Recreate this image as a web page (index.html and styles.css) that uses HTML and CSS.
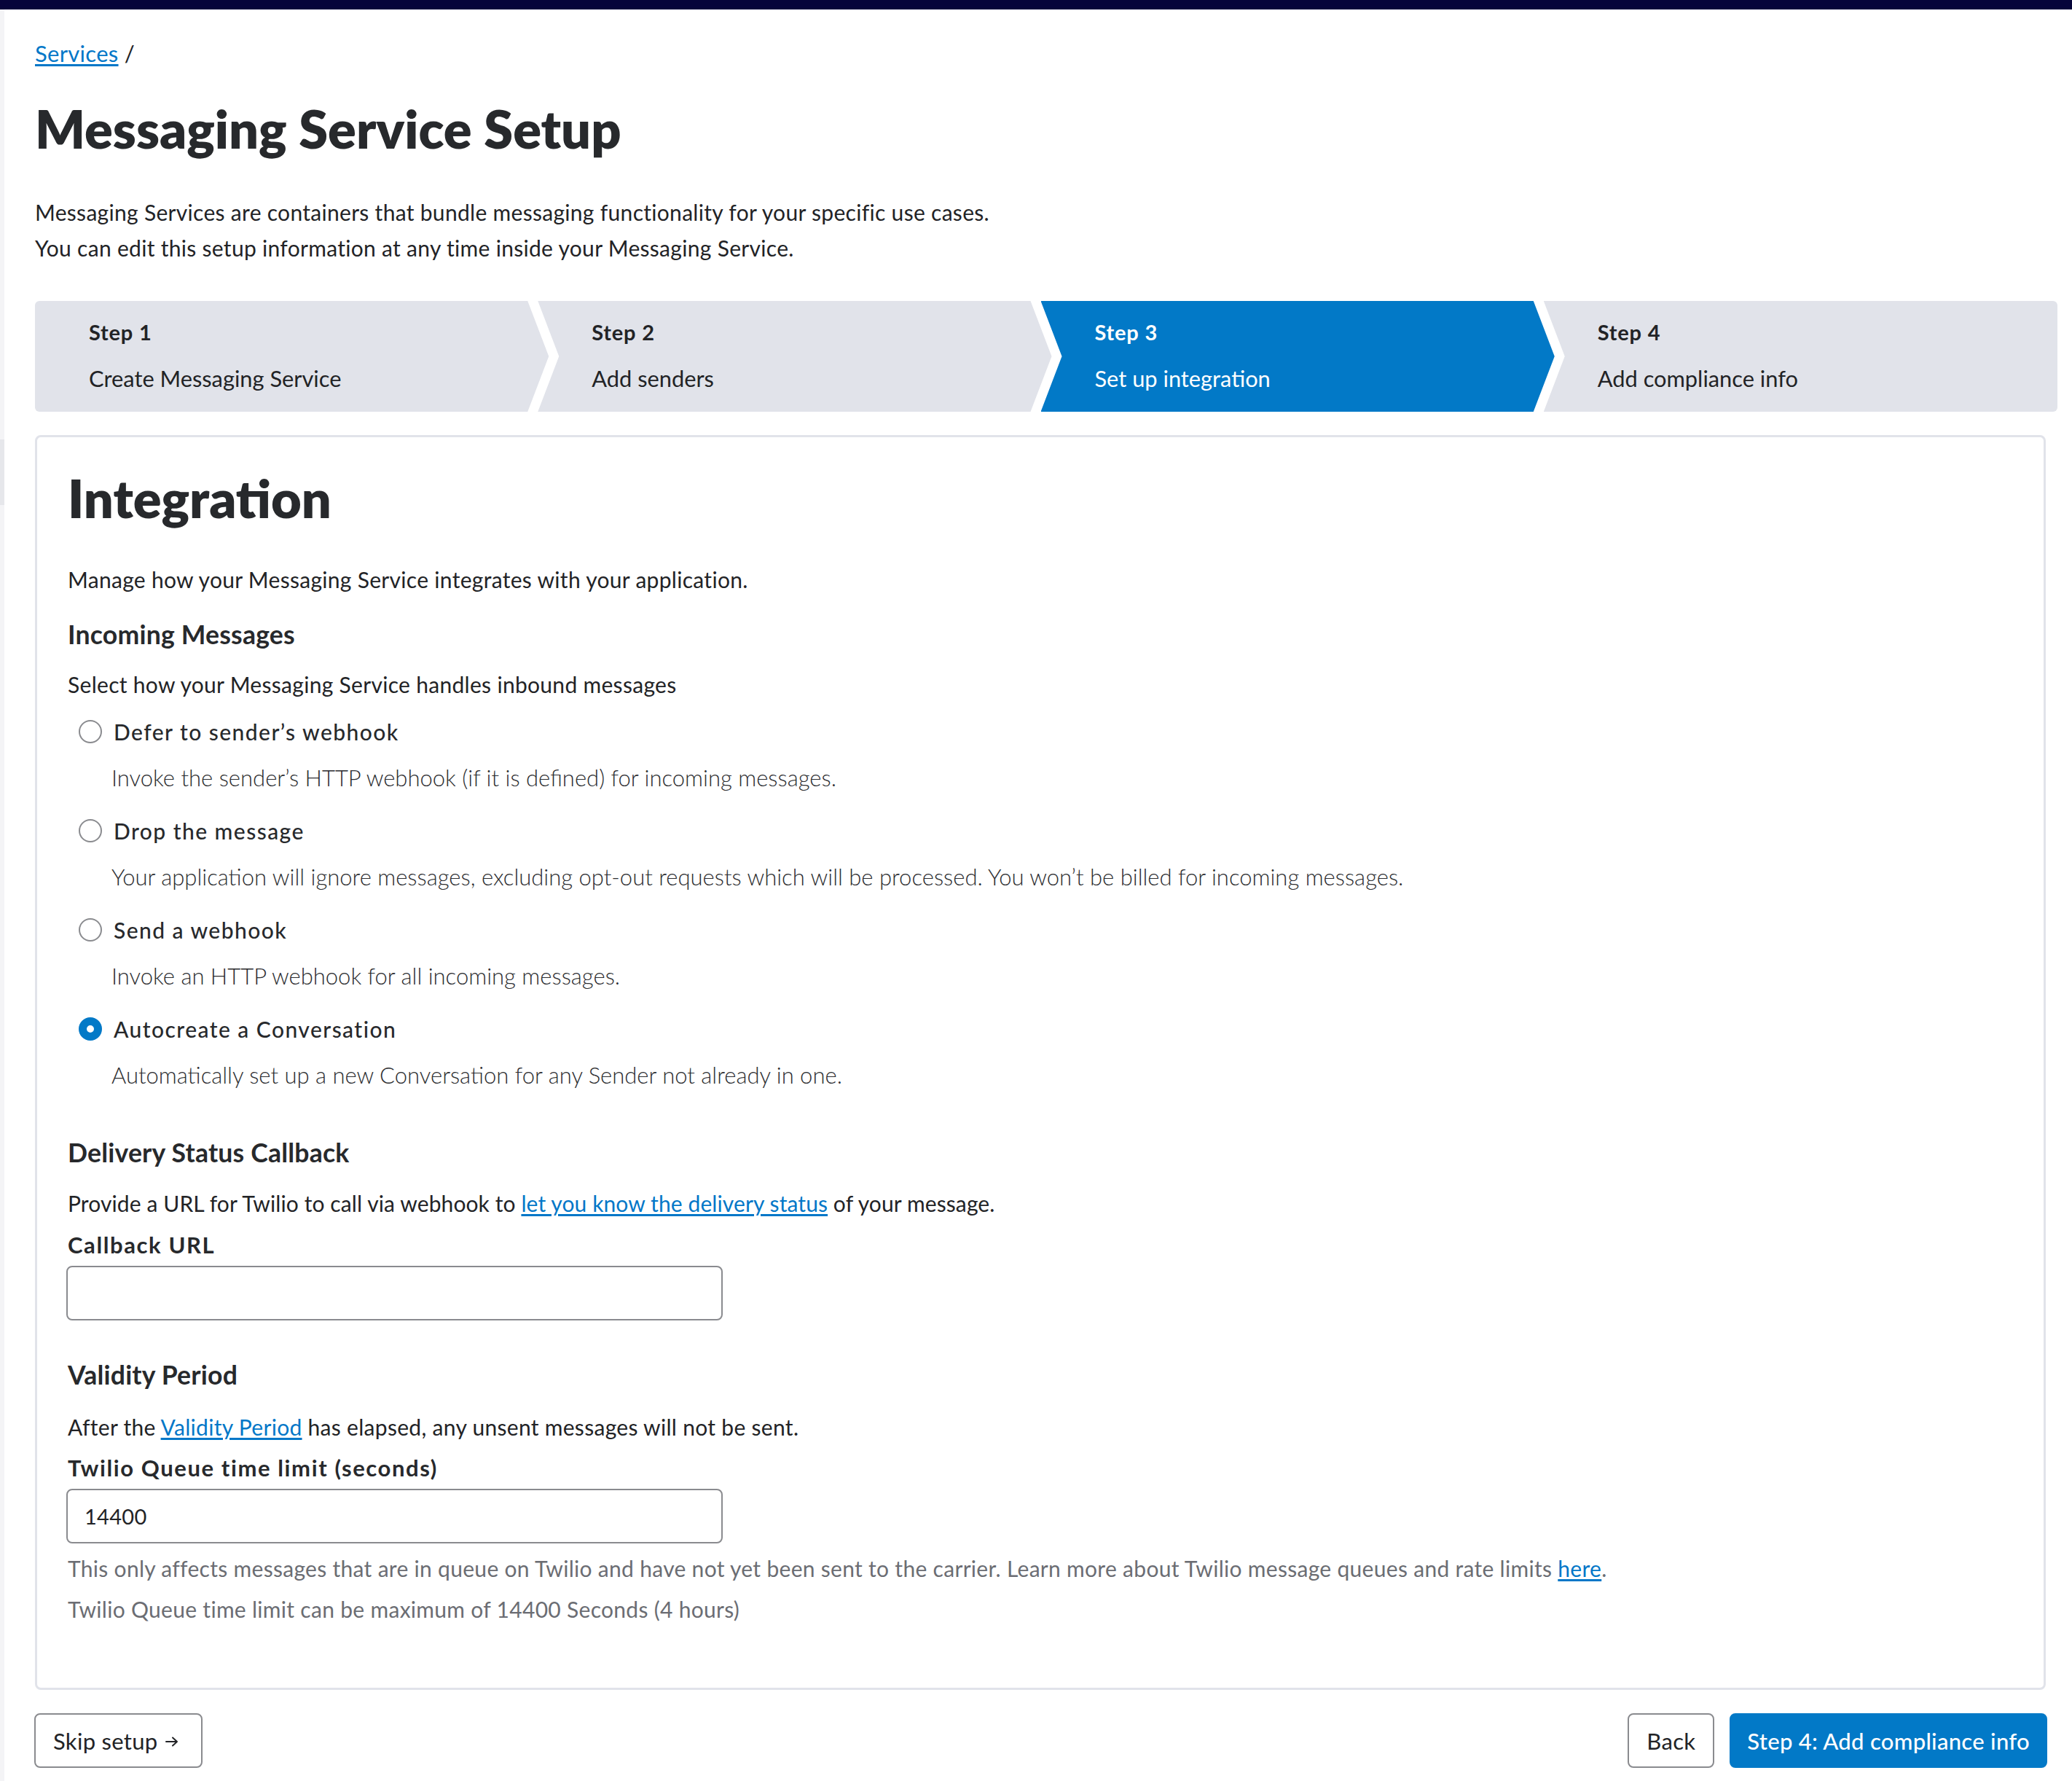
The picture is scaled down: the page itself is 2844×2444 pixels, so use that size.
FILE: index.html
```html
<!DOCTYPE html>
<html lang="en">
<head>
<meta charset="utf-8">
<title>Messaging Service Setup</title>
<link rel="stylesheet" href="styles.css">
</head>
<body>
<div class="topbar"></div>
<div class="shell">
  <aside class="rail"><div class="rail-mark"></div></aside>
  <main class="main">
    <nav class="crumbs"><a href="#" class="link">Services</a> /</nav>
    <h1 class="page-title">Messaging Service Setup</h1>
    <p class="intro">Messaging Services are containers that bundle messaging functionality for your specific use cases.<br>You can edit this setup information at any time inside your Messaging Service.</p>

    <ol class="steps">
      <li class="step step-first"><span class="step-num">Step 1</span><span class="step-name">Create Messaging Service</span></li>
      <li class="step step-mid"><span class="step-num">Step 2</span><span class="step-name">Add senders</span></li>
      <li class="step step-mid step-active"><span class="step-num">Step 3</span><span class="step-name">Set up integration</span></li>
      <li class="step step-last"><span class="step-num">Step 4</span><span class="step-name">Add compliance info</span></li>
    </ol>

    <section class="card">
      <h2 class="card-title">Integration</h2>
      <p class="text lead">Manage how your Messaging Service integrates with your application.</p>

      <h3 class="section-title first">Incoming Messages</h3>
      <p class="text sub">Select how your Messaging Service handles inbound messages</p>

      <div class="options">
        <div class="option">
          <div class="option-row"><span class="radio"></span><span class="option-label">Defer to sender’s webhook</span></div>
          <p class="option-desc">Invoke the sender’s HTTP webhook (if it is defined) for incoming messages.</p>
        </div>
        <div class="option">
          <div class="option-row"><span class="radio"></span><span class="option-label">Drop the message</span></div>
          <p class="option-desc">Your application will ignore messages, excluding opt-out requests which will be processed. You won’t be billed for incoming messages.</p>
        </div>
        <div class="option">
          <div class="option-row"><span class="radio"></span><span class="option-label">Send a webhook</span></div>
          <p class="option-desc">Invoke an HTTP webhook for all incoming messages.</p>
        </div>
        <div class="option">
          <div class="option-row"><span class="radio checked"></span><span class="option-label">Autocreate a Conversation</span></div>
          <p class="option-desc">Automatically set up a new Conversation for any Sender not already in one.</p>
        </div>
      </div>

      <h3 class="section-title delivery">Delivery Status Callback</h3>
      <p class="text sub tight">Provide a URL for Twilio to call via webhook to <a href="#" class="link">let you know the delivery status</a> of your message.</p>
      <label class="field-label">Callback URL</label>
      <div class="input"></div>

      <h3 class="section-title validity">Validity Period</h3>
      <p class="text sub">After the <a href="#" class="link">Validity Period</a> has elapsed, any unsent messages will not be sent.</p>
      <label class="field-label">Twilio Queue time limit (seconds)</label>
      <div class="input"><span class="input-value">14400</span></div>
      <p class="help first-help">This only affects messages that are in queue on Twilio and have not yet been sent to the carrier. Learn more about Twilio message queues and rate limits <a href="#" class="link">here</a>.</p>
      <p class="help">Twilio Queue time limit can be maximum of 14400 Seconds (4 hours)</p>
    </section>

    <div class="actions">
      <button class="btn btn-secondary btn-skip">Skip setup <svg class="arrow" viewBox="0 0 20 16" width="20" height="16" aria-hidden="true"><path d="M2 8h15M11 2.5 17 8l-6 5.5" fill="none" stroke="currentColor" stroke-width="2" stroke-linecap="round" stroke-linejoin="round"/></svg></button>
      <div class="actions-right">
        <button class="btn btn-secondary">Back</button>
        <button class="btn btn-primary">Step 4: Add compliance info</button>
      </div>
    </div>
  </main>
</div>
</body>
</html>
```

FILE: styles.css
```css
* { box-sizing: border-box; }

html, body {
  margin: 0;
  padding: 0;
  background: #ffffff;
}

body {
  font-family: Lato, "Open Sans", sans-serif;
  color: #222326;
  font-size: 30px;
  letter-spacing: 0.3px;
}

.topbar {
  height: 13px;
  background: #06043a;
}

.shell {
  display: flex;
  min-height: 2431px;
}

.rail {
  width: 6px;
  flex: 0 0 6px;
  background: #f4f4f6;
}

.rail-mark {
  margin-top: 590px;
  height: 90px;
  background: #e6e7eb;
}

.main {
  flex: 1;
  padding: 36px 36px 0 42px;
}

.link {
  color: #0277c8;
  text-decoration: underline;
  text-underline-offset: 3px;
}

.crumbs {
  line-height: 48px;
  font-size: 31px;
  color: #222326;
}

.page-title {
  margin: 39px 0 0;
  font-size: 72px;
  line-height: 80px;
  font-weight: 800;
  letter-spacing: 0;
  color: #27292c;
}

.intro {
  margin: 51px 0 0;
  line-height: 49px;
}

.steps {
  list-style: none;
  margin: 48px -16px 0 0;
  padding: 0;
  display: flex;
  height: 152px;
  border-radius: 6px;
  overflow: hidden;
}

.step {
  flex: 1 1 0;
  display: flex;
  flex-direction: column;
  padding: 23px 0 0 74px;
  background: #e1e3ea;
  color: #222326;
}

.step + .step { margin-left: -15px; }

.step-first {
  clip-path: polygon(0 0, calc(100% - 29px) 0, 100% 50%, calc(100% - 29px) 100%, 0 100%);
}

.step-mid {
  clip-path: polygon(0 0, calc(100% - 29px) 0, 100% 50%, calc(100% - 29px) 100%, 0 100%, 29px 50%);
}

.step-last {
  clip-path: polygon(0 0, 100% 0, 100% 100%, 0 100%, 29px 50%);
}

.step-active {
  background: #0279c7;
  color: #ffffff;
}

.step-num {
  font-weight: 700;
  font-size: 29px;
  letter-spacing: 0.8px;
  line-height: 40px;
}

.step-name {
  margin-top: 20px;
  font-size: 30.8px;
  letter-spacing: 0;
  line-height: 48px;
}

.card {
  margin-top: 32px;
  border: 3px solid #e1e3ea;
  border-radius: 8px;
  padding: 43px 42px 84px;
}

.card-title {
  margin: 0;
  font-size: 72px;
  line-height: 80px;
  font-weight: 800;
  letter-spacing: 0;
  color: #27292c;
}

.text {
  margin: 0;
  line-height: 48px;
}

.lead { margin-top: 48px; }

.section-title {
  margin: 0;
  font-size: 35.6px;
  line-height: 48px;
  font-weight: 700;
  letter-spacing: 0.2px;
  color: #27292c;
}

.section-title.first { margin-top: 28px; }
.section-title.delivery { margin-top: 59px; }
.section-title.validity { margin-top: 51px; }

.sub { margin-top: 20px; }
.section-title.delivery + .sub { margin-top: 21px; }
.section-title.validity + .sub { margin-top: 23px; }
.sub.tight { letter-spacing: 0.1px; }

.options {
  margin-top: 17px;
  display: flex;
  flex-direction: column;
  gap: 25px;
}

.option-row {
  display: flex;
  align-items: center;
  height: 48px;
  padding-left: 15px;
}

.radio {
  width: 32px;
  height: 32px;
  flex: 0 0 32px;
  border: 2px solid #8a8b8f;
  border-radius: 50%;
  background: #ffffff;
}

.radio.checked {
  border: 11px solid #0279c7;
}

.option-label {
  margin-left: 16px;
  font-size: 30px;
  font-weight: 500;
  letter-spacing: 1.45px;
  color: #27292c;
}

.option-desc {
  margin: 15px 0 0;
  padding-left: 60px;
  font-size: 31px;
  line-height: 48px;
  font-weight: 300;
  letter-spacing: 0;
  color: #2c2d30;
}

.field-label {
  display: block;
  margin-top: 9px;
  font-size: 31px;
  font-weight: 700;
  letter-spacing: 1.6px;
  line-height: 48px;
  color: #27292c;
}

.section-title.validity + .sub + .field-label { margin-top: 8px; }

.input {
  margin: 5px 0 0 -2px;
  width: 901px;
  height: 75px;
  border: 2px solid #8a8b8f;
  border-radius: 8px;
  display: flex;
  align-items: center;
  padding-left: 23px;
}

.input-value {
  font-size: 29px;
  color: #222326;
}

.help {
  margin: 8px 0 0;
  line-height: 48px;
  color: #6b6d73;
}

.help.first-help { margin-top: 10px; }

.actions {
  margin: 32px -2px 0 -1px;
  display: flex;
  justify-content: space-between;
}

.actions-right {
  display: flex;
  gap: 21px;
}

.btn {
  height: 75px;
  border-radius: 8px;
  font-family: Lato, "Open Sans", sans-serif;
  font-size: 31px;
  letter-spacing: 0.3px;
  padding: 0 24px;
  display: inline-flex;
  align-items: center;
}

.btn-skip {
  padding: 0 30px 0 24px;
  gap: 9px;
}

.arrow {
  width: 20px;
  height: 16px;
  margin-top: 2px;
}

.btn-secondary {
  background: #ffffff;
  border: 2px solid #8a8b8f;
  color: #222326;
}

.btn-primary {
  background: #0279c7;
  border: 2px solid #0279c7;
  color: #ffffff;
  font-weight: 500;
  padding: 0 22px;
}
```
